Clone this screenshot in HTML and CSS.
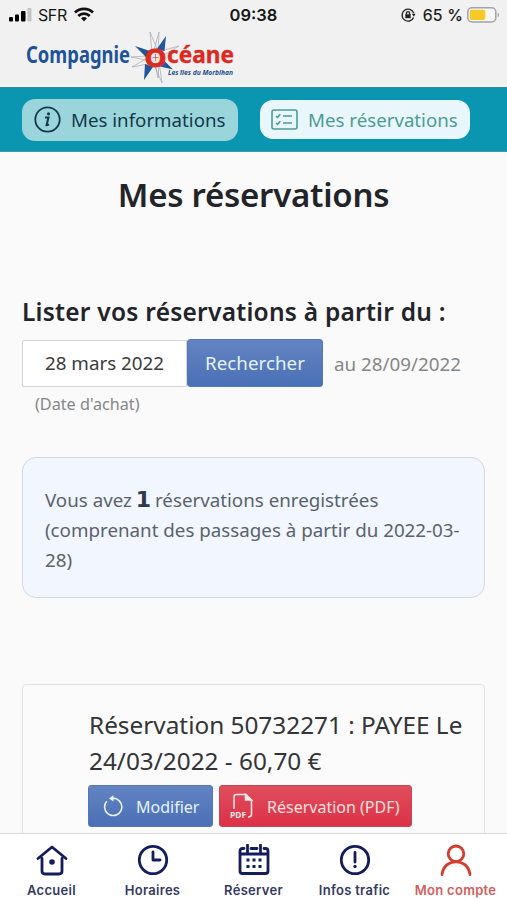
FILE: index.html
```html
<!DOCTYPE html>
<html lang="fr">
<head>
<meta charset="utf-8">
<meta name="viewport" content="width=device-width, initial-scale=1">
<title>Mes réservations</title>
<link rel="stylesheet" href="styles.css">
</head>
<body>
<div class="app">
  <header class="top">
    <div class="status">
      <div class="status-left">
        <svg class="signal" width="23" height="14" viewBox="0 0 23 14"><rect x="0" y="9" width="4" height="4.500" rx="1"/><rect x="6" y="6.500" width="4" height="7" rx="1"/><rect x="12" y="3" width="4.500" height="10.500" rx="1"/><rect x="18.500" y="0" width="4" height="13.500" rx="1" fill="#c4c4c6"/></svg>
        <span class="carrier">SFR</span>
        <svg class="wifi" width="20" height="15" viewBox="0 0 20 15" fill="none" stroke="#111" stroke-width="2.800"><path d="M1 5.400a13 13 0 0 1 18 0M4.300 8.900a8.200 8.200 0 0 1 11.400 0"/><path d="M10 14.500l-3-3.200a4.400 4.400 0 0 1 6 0z" fill="#111" stroke="none"/></svg>
      </div>
      <div class="clock">09:38</div>
      <div class="status-right">
        <svg width="15" height="14" viewBox="0 0 15 14" fill="none" stroke="#222" stroke-width="1.400"><path d="M12.600 9.500A6 6 0 1 1 12.700 5"/><path d="M10.800 5.800h3.800l-1.700 3z" fill="#222" stroke="none"/><rect x="4.300" y="6.200" width="5.400" height="4" fill="#222" stroke="none"/><path d="M5.400 6.500V5.200a1.600 1.600 0 0 1 3.200 0v1.300"/></svg>
        <span class="percent">65 %</span>
        <svg width="33" height="16" viewBox="0 0 33 16"><rect x=".8" y=".8" width="28" height="14.200" rx="4.200" fill="#f7f7f7" stroke="#a3a3a3" stroke-width="1.500"/><rect x="2.800" y="2.800" width="15.500" height="10.200" rx="2" fill="#f8ca25"/><path d="M30.700 5.500q3 2.500 0 5z" fill="#a3a3a3"/></svg>
      </div>
    </div>
    <svg class="logo" width="224" height="56" viewBox="24 30 224 56" role="img" aria-label="Compagnie Océane, Les îles du Morbihan">
      <g fill="#f5f5f5" stroke="#a5a3b4" stroke-width=".7">
        <path d="M150 32l7 17-5 3zM159 32l-5 18 4 2zM179 46l-18 5 1 5zM131 57l16-1-1 4zM132 67l14-8 2 5zM162 83l-8-19 5-2zM158 78l-3-14 4 1z"/>
      </g>
      <g fill="#24569b">
        <path d="M166 36l-1.500 15-8-1.500zM135 46l15 5-4 6zM144 80l1-16 8 3zM173 69.500l-13-3 4-6z"/>
      </g>
      <ellipse cx="155.500" cy="57.500" rx="8" ry="8" fill="#f3e3df"/>
      <text class="logo-blue" x="26" y="62.500" textLength="104" lengthAdjust="spacingAndGlyphs">Compagnie</text>
      <text class="logo-o" x="144.500" y="66.500" textLength="22" lengthAdjust="spacingAndGlyphs">O</text>
      <text class="logo-red" x="167" y="62.500" textLength="67" lengthAdjust="spacingAndGlyphs">céane</text>
      <path d="M155.500 54v7M152.500 57.500h6" stroke="#a56b76" stroke-width=".8"/>
      <text class="logo-tag" x="168" y="75" textLength="65" lengthAdjust="spacingAndGlyphs">Les îles du Morbihan</text>
    </svg>
  </header>

  <nav class="tabs">
    <a class="tab tab-info">
      <svg width="27" height="27" viewBox="0 0 27 27"><circle cx="13.500" cy="13.500" r="12.200" fill="none" stroke="#123947" stroke-width="1.800"/><circle cx="14.500" cy="7.800" r="1.600" fill="#123947"/><path d="M11 11.500h3.500l-2 7.800q.8.300 2.500-1" fill="none" stroke="#123947" stroke-width="2"/></svg>
      <span>Mes informations</span>
    </a>
    <a class="tab tab-resa">
      <svg width="27" height="21" viewBox="0 0 27 21" fill="none" stroke="#4c9c96" stroke-width="1.600"><rect x="1" y="1" width="25" height="19" rx="2"/><path d="M12 7h9M12 14h9M5 7l1.500 1.400L9.300 5.300M5 14l1.500 1.400 2.800-3.100"/></svg>
      <span>Mes réservations</span>
    </a>
  </nav>

  <main class="content">
    <h1><span>Mes réservations</span></h1>
    <h2><span>Lister vos réservations à partir du :</span></h2>
    <div class="search">
      <div class="date">28 mars 2022</div>
      <button class="find">Rechercher</button>
      <span class="until">au 28/09/2022</span>
    </div>
    <p class="hint">(Date d'achat)</p>
    <section class="notice">
      <p><span>Vous avez <b>1</b> réservations enregistrées</span><br><span>(comprenant des passages à partir du 2022-03-</span><br><span>28)</span></p>
    </section>
    <section class="card">
      <h3><span>Réservation 50732271 : PAYEE Le</span><br><span>24/03/2022 - 60,70 €</span></h3>
      <div class="actions">
        <button class="btn edit">
          <svg width="20" height="22" viewBox="0 0 20 22" fill="none" stroke="#e9f2ff" stroke-width="1.600"><path d="M3.800 6.200A8.600 8.600 0 1 0 9 3.400h3.400"/><path d="M10.500.3L6 3.400l4.500 3.200z" fill="#e9f2ff" stroke="none"/></svg>
          <span>Modifier</span>
        </button>
        <button class="btn pdf">
          <svg width="24" height="26" viewBox="0 0 24 26" fill="none" stroke="#ffe9e9" stroke-width="1.500"><path d="M4 16V4q0-2.500 2.500-2.500H16l5.500 5.500v14.500q0 2.500-3.500 2.500"/><path d="M15.500 1.500V7h6z" fill="#ffe9e9"/><text class="pdf-mark" x="0" y="25" textLength="16" lengthAdjust="spacingAndGlyphs">PDF</text></svg>
          <span>Réservation (PDF)</span>
        </button>
      </div>
    </section>
  </main>

  <nav class="bottom">
    <a class="item">
      <svg width="32" height="32" viewBox="0 0 32 32"><path d="M2 14.500L16 3l14 11.500M6 14.500V27q0 3 3 3h14q3 0 3-3V14.500"/><circle cx="16" cy="18" r="2.800" class="dot"/></svg>
      <span>Accueil</span>
    </a>
    <a class="item">
      <svg width="32" height="32" viewBox="0 0 32 32"><circle cx="16" cy="16" r="13.700"/><path d="M16 8v8h7"/></svg>
      <span>Horaires</span>
    </a>
    <a class="item">
      <svg width="32" height="32" viewBox="0 0 32 32"><path d="M6 4.500H4.500q-2.500 0-2.500 2.500v20q0 2.500 2.500 2.500h23q2.500 0 2.500-2.500V7q0-2.500-2.500-2.500H26M13 4.500h6M2 10h28M9.500 1v7M22.500 1v7"/><path class="dot" d="M8.500 14.500h3v3h-3zM14.500 14.500h3v3h-3zM20.500 14.500h3v3h-3zM8.500 21h3v3h-3zM14.500 21h3v3h-3zM20.500 21h3v3h-3z"/></svg>
      <span>Réserver</span>
    </a>
    <a class="item">
      <svg width="32" height="32" viewBox="0 0 32 32"><circle cx="16" cy="16" r="13.700"/><path d="M16 8.500v9.500"/><circle cx="16" cy="22.500" r="1.700" class="dot"/></svg>
      <span>Infos trafic</span>
    </a>
    <a class="item active">
      <svg width="32" height="32" viewBox="0 0 32 32"><circle cx="16" cy="9.800" r="7.800"/><path d="M2 30.500c1-8 6.500-12.700 14-12.700s13 4.700 14 12.700"/></svg>
      <span>Mon compte</span>
    </a>
  </nav>
</div>
</body>
</html>
```

FILE: styles.css
```css
* { box-sizing: border-box; }
body { margin: 0; font-family: "Noto Sans", sans-serif; background: #fafafa; color: #26282c; }
h1, h2, h3, p { margin: 0; }
button { font: inherit; border: 0; padding: 0; }
span { white-space: nowrap; }
svg { display: block; flex: none; }

.app { width: 507px; height: 900px; display: flex; flex-direction: column; overflow: hidden; }

.top { height: 87px; flex: none; background: #f1f1f1; }
.status { height: 29px; margin-bottom: 1px; display: grid; grid-template-columns: 1fr auto 1fr; align-items: center; padding: 0 7px 0 9px; font-family: Inter, sans-serif; color: #161616; }
.status-left, .status-right { display: flex; align-items: center; }
.status-right { justify-content: flex-end; }
.carrier { font-size: 16px; margin: 0 7px 0 6px; letter-spacing: -.4px; }
.clock { font-size: 16.500px; font-weight: 600; margin-right: 2px; }
.percent { font-size: 16px; margin: 0 4px 0 7px; letter-spacing: .1px; -webkit-text-stroke: .2px #161616; }
.logo { margin-left: 24px; }
.logo text { font-family: "Noto Sans", sans-serif; font-weight: 700; }
.logo .logo-blue { font-size: 23px; fill: #20529b; }
.logo .logo-red { font-size: 24px; fill: #db2a21; stroke: #db2a21; stroke-width: .4px; }
.logo .logo-o { font-size: 25.500px; fill: #db2a21; stroke: #db2a21; stroke-width: .8px; }
.logo .logo-tag { font-size: 7.500px; font-style: italic; fill: #24508c; }

.tabs { height: 65px; flex: none; display: flex; align-items: center; gap: 22px; padding: 0 22px; background: #0a95b0; border-top: 1px solid #3a8796; border-bottom: 1px solid #3a9aaa; }
.tab { display: flex; align-items: center; border-radius: 13px; font-size: 18.700px; }
.tab-info { width: 216px; height: 42px; padding-left: 12px; gap: 10px; background: #9bd5dc; color: #123947; }
.tab-resa { width: 210px; height: 39px; padding-left: 11px; gap: 10px; background: #e9f6fb; color: #4c9c96; }

.content { flex: 1; min-height: 0; overflow: hidden; padding: 0 22px; background: #fafafa; }
h1 { padding-top: 20px; line-height: 46px; font-size: 33px; font-weight: 600; letter-spacing: -.25px; text-align: center; color: #222429; }
h2 { margin-top: 76px; line-height: 36px; font-size: 24.500px; font-weight: 600; letter-spacing: .24px; color: #222429; }
.search { display: flex; align-items: center; margin-top: 9px; }
.date { width: 165px; height: 47px; line-height: 44px; padding-left: 22px; background: #fff; border: 1px solid #d6d6d8; border-radius: 2px 0 0 2px; font-size: 18.800px; color: #3b3b3e; white-space: nowrap; }
.find { width: 136px; height: 48px; border: 1px solid #5577b5; border-radius: 3px; background: linear-gradient(#6384c2, #4a70b5); color: #e5f2ff; font-size: 18.800px; }
.until { margin-left: 11px; padding-top: 1px; font-size: 18.800px; color: #858789; }
.hint { margin: 4px 0 0 13px; line-height: 26px; font-size: 16.200px; color: #858789; }
.notice { height: 141px; margin-top: 40px; padding: 27px 0 0 22px; border: 1.500px solid #d2d8e5; border-radius: 14px; background: #f1f6ff; color: #5a626c; font-size: 18.750px; }
.notice p { line-height: 30px; }
.notice b { font-family: "DejaVu Sans", sans-serif; font-size: 22px; line-height: 1; color: #30374f; margin: 0 -1px; }
.card { height: 190px; margin-top: 86px; padding: 22px 0 0 66px; border: 1.500px solid #e2e2e4; border-radius: 4px; background: #fbfbfb; }
h3 { font-size: 24.350px; line-height: 36px; font-weight: 400; color: #333438; }
.actions { display: flex; gap: 6px; margin: 6px 0 0 -1px; }
.btn { height: 42px; display: flex; align-items: center; border-radius: 3px; font-size: 16px; }
.btn span { padding-top: 2px; }
.edit { width: 125px; padding-left: 14px; gap: 13px; background: linear-gradient(#6384c2, #4a70b5); border: 1px solid #5577b5; color: #e5f2ff; }
.pdf { width: 193px; padding-left: 10px; gap: 13px; background: linear-gradient(#df4e5c, #dc3148); border: 1px solid #c5475a; color: #ffe0de; }
.pdf-mark { font: 700 8px "Noto Sans", sans-serif; fill: #ffe9e9; stroke: none; }

.bottom { height: 67px; flex: none; display: grid; grid-template-columns: repeat(5, 101px); justify-content: center; background: #fff; border-top: 1.500px solid #d8d8d8; }
.item { display: flex; flex-direction: column; align-items: center; padding-top: 10px; color: #1c2455; font: 600 13px/20px Inter, sans-serif; }
.item span { margin-top: 4px; letter-spacing: .3px; color: #343a62; }
.item svg { fill: none; stroke: #141d5c; stroke-width: 2.800; stroke-linecap: round; stroke-linejoin: round; }
.item .dot { fill: #141d5c; stroke: none; }
.item.active svg { stroke: #d43c2e; }
.item.active span { color: #d0605c; }
```
